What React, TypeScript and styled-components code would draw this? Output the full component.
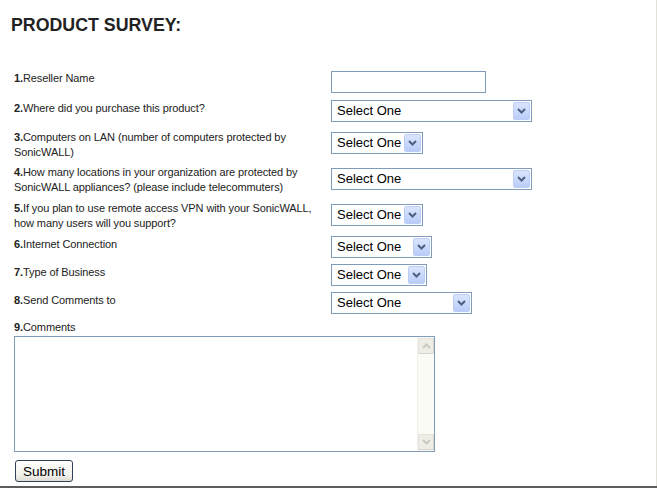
import React from "react";
import styled, { createGlobalStyle } from "styled-components";

const Global = createGlobalStyle`
  html, body { margin: 0; padding: 0; background: #fff; }
  body { width: 657px; height: 488px; overflow: hidden; }
`;

const Frame = styled.div`
  width: 657px;
  height: 488px;
  box-sizing: border-box;
  border-bottom: 2px solid #5c5c5c;
  display: flex;
`;

const Page = styled.div`
  width: 657px;
  box-sizing: border-box;
  border-right: 1px solid #e3e1d9;
  padding: 15px 0 0 11px;
  font-family: "Liberation Sans", Arial, sans-serif;
  color: #222;
`;

const Title = styled.h1`
  margin: 0;
  font-size: 17.8px;
  line-height: 20px;
  font-weight: bold;
  color: #222;
`;

const Form = styled.form`
  margin: 36px 0 0 3px;
  display: flex;
  flex-direction: column;
`;

const Row = styled.div<{ $h: number }>`
  display: grid;
  grid-template-columns: 317px auto;
  height: ${(p) => p.$h}px;
  align-items: start;
`;

const Label = styled.div<{ $dy?: number }>`
  font-size: 11px;
  line-height: 15px;
  letter-spacing: -0.1px;
  color: #222;
  padding-top: ${(p) => p.$dy ?? 0}px;
  b { font-weight: bold; }
`;

const Cell = styled.div<{ $dy?: number }>`
  padding-top: ${(p) => p.$dy ?? 0}px;
  display: flex;
`;

const TextInput = styled.input`
  width: 155px;
  height: 22px;
  box-sizing: border-box;
  border: 1px solid #7f9db9;
  padding: 0 3px;
  margin: 0;
  font: 13px "Liberation Sans", Arial, sans-serif;
  outline: none;
`;

const SelectBox = styled.div<{ $w: number }>`
  width: ${(p) => p.$w}px;
  height: 22px;
  box-sizing: border-box;
  border: 1px solid #7f9db9;
  background: #fff;
  display: flex;
  align-items: center;
  padding: 1px;
  font-size: 13px;
  color: #000;
`;

const SelectText = styled.span`
  flex: 1;
  padding-left: 4px;
  line-height: 18px;
  white-space: nowrap;
`;

const DropButton = styled.span`
  width: 17px;
  height: 18px;
  box-sizing: border-box;
  border: 1px solid #bccdf5;
  border-radius: 2px;
  background: linear-gradient(#dae5fe, #bacdf9);
  display: flex;
  align-items: center;
  justify-content: center;
`;

const Chevron = ({ color }: { color: string }) => (
  <svg width="9" height="6" viewBox="0 0 9 6">
    <path d="M1 1 L4.5 4.5 L8 1" fill="none" stroke={color} strokeWidth="2" />
  </svg>
);

const ChevronUp = ({ color }: { color: string }) => (
  <svg width="9" height="6" viewBox="0 0 9 6">
    <path d="M1 5 L4.5 1.5 L8 5" fill="none" stroke={color} strokeWidth="2" />
  </svg>
);

const Select = ({ w }: { w: number }) => (
  <SelectBox $w={w} role="combobox">
    <SelectText>Select One</SelectText>
    <DropButton>
      <Chevron color="#4d6185" />
    </DropButton>
  </SelectBox>
);

const CommentsLabel = styled(Label)`
  height: 15px;
`;

const AreaBox = styled.div`
  margin-top: 1px;
  width: 421px;
  height: 116px;
  box-sizing: border-box;
  border: 1px solid #7f9db9;
  display: flex;
  background: #fff;
`;

const Area = styled.textarea`
  flex: 1;
  border: none;
  resize: none;
  outline: none;
  margin: 0;
  padding: 2px;
  font: 13px "Liberation Sans", Arial, sans-serif;
`;

const ScrollBar = styled.div`
  width: 17px;
  background: #fbfbf6;
  border-left: 1px solid #f1f0ea;
  display: flex;
  flex-direction: column;
  justify-content: space-between;
  padding: 1px 0;
  box-sizing: border-box;
`;

const ScrollBtn = styled.div`
  height: 16px;
  box-sizing: border-box;
  border: 1px solid #e4e3dc;
  border-right-color: #d6d5cd;
  border-bottom-color: #d6d5cd;
  border-radius: 1px;
  background: #eeede6;
  display: flex;
  align-items: center;
  justify-content: center;
`;

const Submit = styled.button`
  margin: 8px 0 0 1px;
  width: 58px;
  height: 22px;
  box-sizing: border-box;
  border: 1px solid #30405a;
  border-radius: 3px;
  background: linear-gradient(#ffffff, #f2f1ec 70%, #dedcd3);
  font: 13.5px "Liberation Sans", Arial, sans-serif;
  color: #000;
  padding: 0;
  align-self: flex-start;
`;

type Q = { label: React.ReactNode; h: number; ldy: number; cdy: number; control: React.ReactNode };

const questions: Q[] = [
  { label: <><b>1.</b>Reseller Name</>, h: 29, ldy: 0, cdy: 0, control: <TextInput type="text" /> },
  { label: <><b>2.</b>Where did you purchase this product?</>, h: 30, ldy: 1, cdy: 0, control: <Select w={201} /> },
  {
    label: <><b>3.</b>Computers on LAN (number of computers protected by<br />SonicWALL)</>,
    h: 35, ldy: 0, cdy: 2, control: <Select w={92} />,
  },
  {
    label: <><b>4.</b>How many locations in your organization are protected by<br />SonicWALL appliances? (please include telecommuters)</>,
    h: 36, ldy: 0, cdy: 3, control: <Select w={201} />,
  },
  {
    label: <><b>5.</b>If you plan to use remote access VPN with your SonicWALL,<br />how many users will you support?</>,
    h: 35, ldy: 0, cdy: 3, control: <Select w={92} />,
  },
  { label: <><b>6.</b>Internet Connection</>, h: 28, ldy: 1, cdy: 0, control: <Select w={101} /> },
  { label: <><b>7.</b>Type of Business</>, h: 28, ldy: 1, cdy: 0, control: <Select w={96} /> },
  { label: <><b>8.</b>Send Comments to</>, h: 28, ldy: 1, cdy: 0, control: <Select w={141} /> },
];

export default function App() {
  return (
    <>
      <Global />
      <Frame>
        <Page>
          <Title>PRODUCT SURVEY:</Title>
          <Form onSubmit={(e) => e.preventDefault()}>
            {questions.map((q, i) => (
              <Row key={i} $h={q.h}>
                <Label $dy={q.ldy}>{q.label}</Label>
                <Cell $dy={q.cdy}>{q.control}</Cell>
              </Row>
            ))}
            <CommentsLabel>
              <b>9.</b>Comments
            </CommentsLabel>
            <AreaBox>
              <Area />
              <ScrollBar>
                <ScrollBtn>
                  <ChevronUp color="#cbcac2" />
                </ScrollBtn>
                <ScrollBtn>
                  <Chevron color="#cbcac2" />
                </ScrollBtn>
              </ScrollBar>
            </AreaBox>
            <Submit type="submit">Submit</Submit>
          </Form>
        </Page>
      </Frame>
    </>
  );
}
